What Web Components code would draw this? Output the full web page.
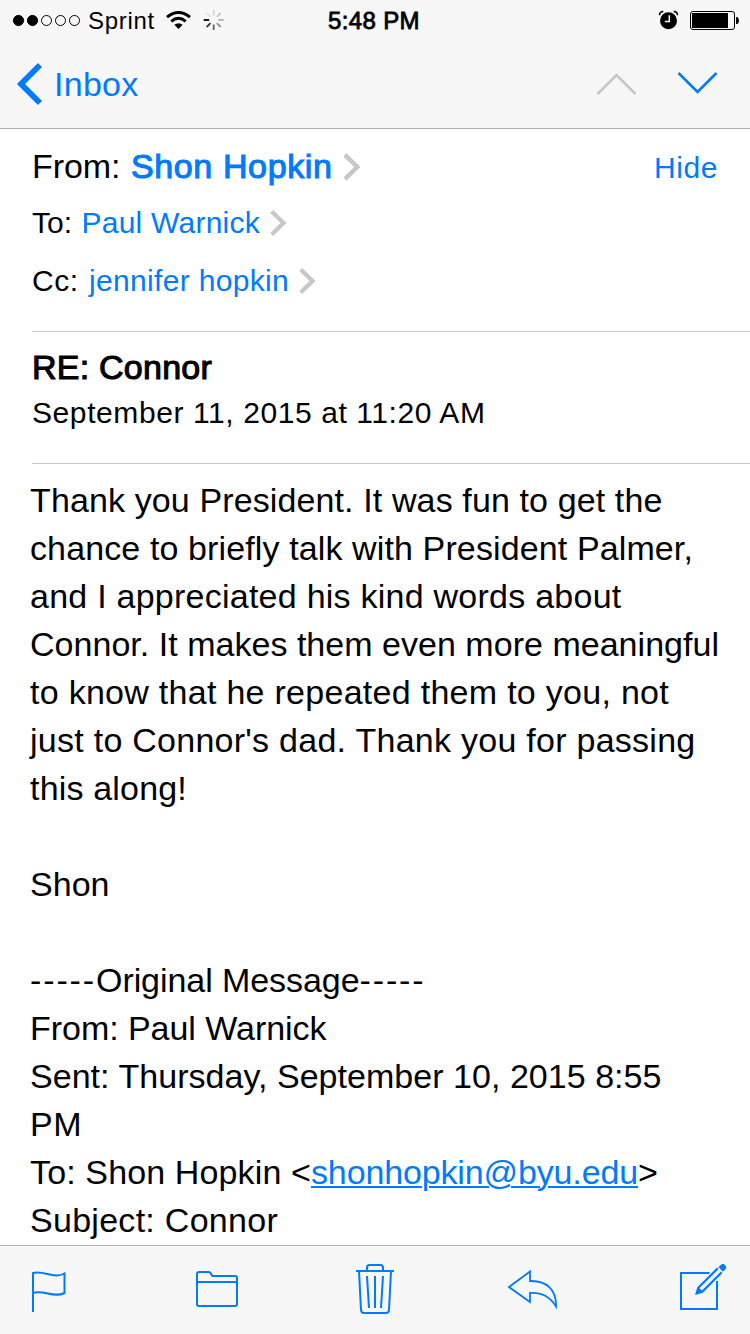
<!DOCTYPE html>
<html lang="en">
<head>
<meta charset="utf-8">
<title>Inbox</title>
<style>
html,body{margin:0;padding:0;background:#fff}
body{width:750px;height:1334px;overflow:hidden;color:#000;font-family:"Liberation Sans",Arial,Helvetica,sans-serif}
</style>
</head>
<body>
<mail-screen></mail-screen>
<script>
// A single line of text tracked to a given advance width.
class TextRun extends HTMLElement {
  constructor() {
    super();
    this.attachShadow({ mode: 'open' }).innerHTML =
      '<style>:host{display:inline-block;white-space:nowrap;flex:none}span{display:inline-block;white-space:pre}</style><span><slot></slot></span>';
  }
  connectedCallback() {
    const w = parseFloat(this.getAttribute('w'));
    if (!w) return;
    const span = this.shadowRoot.querySelector('span');
    const natural = span.getBoundingClientRect().width;
    const n = this.textContent.length;
    span.style.letterSpacing = ((w - natural) / n).toFixed(4) + 'px';
    this.style.width = w + 'px';
  }
}

class StatusBar extends HTMLElement {
  constructor() {
    super();
    this.attachShadow({ mode: 'open' }).innerHTML = `
      <style>
        :host{display:grid;grid-template-columns:328px 1fr auto;height:40px;font-size:24px;line-height:28px}
        div{display:flex;align-items:flex-start}
        svg{display:block;flex:none}
        text-run{margin-top:7px}
        .l{padding-left:12px}
        .time{-webkit-text-stroke:.8px #000}
        .r{padding-right:10px}
      </style>
      <div class="l">
        <svg width="70" height="40" viewBox="12 0 70 40"><g stroke="#000" stroke-width="1"><circle cx="18.5" cy="20.5" r="5.1"/><circle cx="32.5" cy="20.5" r="5.1"/><g fill="none"><circle cx="46.5" cy="20.5" r="5"/><circle cx="60.5" cy="20.5" r="5"/><circle cx="74.5" cy="20.5" r="5"/></g></g></svg>
        <text-run w="67" style="margin-left:6px">Sprint</text-run>
        <svg width="72" height="40" viewBox="155 0 72 40">
          <g fill="none" stroke="#000" stroke-width="3"><path d="M167 17.2Q178.500 7.800 190 17.200"/><path d="M171.300 21.300Q178.500 15.300 185.700 21.300"/></g>
          <path d="M174.300 24.800Q178.500 21.600 182.700 24.800L178.500 29Z"/>
          <g stroke-width="1.800" stroke-linecap="butt" transform="translate(213.700 20)">
            <path d="M0-4.500V-10" stroke="#d4d4d4"/><path d="M3.200-3.200L7-7" stroke="#c5c5c5"/><path d="M4.500 0H10" stroke="#b0b0b0"/><path d="M3.200 3.200L7 7" stroke="#929292"/><path d="M0 4.500V10" stroke="#606060"/><path d="M-3.200 3.200L-7 7" stroke="#333"/><path d="M-4.500 0H-10" stroke="#000"/><path d="M-3.200-3.200L-7-7" stroke="#e4e4e4"/>
          </g>
        </svg>
      </div>
      <div class="time"><text-run w="92">5:48 PM</text-run></div>
      <div class="r">
        <svg width="82" height="40" viewBox="658 0 82 40">
          <circle cx="668.500" cy="20.700" r="8.500"/>
          <path d="M659.500 15.200Q659.500 11.800 663.300 11.600M677.500 15.200Q677.500 11.800 673.700 11.600" fill="none" stroke="#000" stroke-width="1.500"/>
          <path d="M669.300 15.200V21.400H664.800" fill="none" stroke="#f7f7f7" stroke-width="1.500"/>
          <rect x="690.500" y="11.500" width="44" height="18" rx="2.500" fill="none" stroke="#000"/>
          <rect x="692" y="13" width="36" height="15" rx=".6"/>
          <path d="M736 17h1.200q1.800 1 1.800 3.500t-1.800 3.500H736z"/>
        </svg>
      </div>`;
  }
}

class NavBar extends HTMLElement {
  constructor() {
    super();
    this.attachShadow({ mode: 'open' }).innerHTML = `
      <style>
        :host{display:flex;align-items:flex-start;height:88px;font-size:34px;line-height:40px;color:#007aff}
        svg{display:block;flex:none}
        text-run{margin:24px auto 0 9px}
      </style>
      <svg width="45" height="88" viewBox="0 40 45 88"><path d="M40 65L21 84L40 103" fill="none" stroke="#007aff" stroke-width="5.700"/></svg>
      <text-run w="84.500">Inbox</text-run>
      <svg width="160" height="88" viewBox="590 40 160 88"><g fill="none" stroke-width="2.600"><path d="M597.500 94L616.500 75L635.500 94" stroke="#c7c7c7"/><path d="M678.500 73L697.500 92L716.500 73" stroke="#007aff"/></g></svg>`;
  }
}

class AddressRow extends HTMLElement {
  constructor() {
    super();
    this.attachShadow({ mode: 'open' }).innerHTML = `
      <style>
        :host{display:flex;height:40px;line-height:40px;font-size:30px}
        :host([lead]){font-size:34px}
        ::slotted([slot=name]){color:#007aff}
        :host([lead]) ::slotted([slot=name]){-webkit-text-stroke:1.100px #007aff}
        ::slotted([slot=action]){color:#007aff;font-size:30px;margin-left:auto}
        svg{display:block;flex:none;width:17px;height:26px;margin:7px 0 0 10px}
        :host([lead]) svg{width:18px;height:28px;margin-top:6.500px}
      </style>
      <slot></slot><slot name="name"></slot>
      <svg viewBox="0 0 17 26"><path d="M1.800 1.600L13.500 13L1.800 24.400" fill="none" stroke="#c7c7c7" stroke-width="4.200"/></svg>
      <slot name="action"></slot>`;
  }
}

class MessageHeader extends HTMLElement {
  constructor() {
    super();
    this.attachShadow({ mode: 'open' }).innerHTML = `
      <style>
        :host{display:block;padding-left:32px}
        section{border-bottom:1px solid #c8c7cc;display:flex;flex-direction:column}
        .to{height:185px;padding-top:17px}
        address-row+address-row{margin-top:17px}
        address-row:last-child{margin-top:18px}
        .subj{padding-top:15px;height:116px;line-height:40px;font-size:30px}
        .title{height:40px;font-size:34px;-webkit-text-stroke:1.100px #000}
        .date{height:40px;margin-top:6px}
      </style>
      <section class="to">
        <address-row lead><text-run w="88.500" style="margin-right:10.500px">From:</text-run><text-run slot="name" w="201.500">Shon Hopkin</text-run><text-run slot="action" w="64" style="margin-right:32px;padding-top:2px;line-height:40px">Hide</text-run></address-row>
        <address-row><text-run w="40" style="margin-right:9.500px">To:</text-run><text-run slot="name" w="178.500">Paul Warnick</text-run></address-row>
        <address-row><text-run w="46.500" style="margin-right:10.500px">Cc:</text-run><text-run slot="name" w="200">jennifer hopkin</text-run></address-row>
      </section>
      <section class="subj">
        <div class="title"><text-run w="180">RE: Connor</text-run></div>
        <div class="date"><text-run w="453.500">September 11, 2015 at 11:20 AM</text-run></div>
      </section>`;
  }
}

class MessageBody extends HTMLElement {
  constructor() {
    super();
    this.attachShadow({ mode: 'open' }).innerHTML = `
      <style>
        :host{display:block;padding:12px 0 0 30px;font-size:34px;line-height:48px}
        p{margin:0;height:48px;display:flex}
        a{color:#007aff}
      </style>
      <p><text-run w="632.500">Thank you President. It was fun to get the</text-run></p>
      <p><text-run w="663">chance to briefly talk with President Palmer,</text-run></p>
      <p><text-run w="591.500">and I appreciated his kind words about</text-run></p>
      <p><text-run w="689">Connor. It makes them even more meaningful</text-run></p>
      <p><text-run w="639">to know that he repeated them to you, not</text-run></p>
      <p><text-run w="665.500">just to Connor's dad. Thank you for passing</text-run></p>
      <p><text-run w="157">this along!</text-run></p>
      <p></p>
      <p><text-run w="79.500">Shon</text-run></p>
      <p></p>
      <p><text-run w="66">-----</text-run><text-run w="263.500">Original Message</text-run><text-run w="66">-----</text-run></p>
      <p><text-run w="296.500">From: Paul Warnick</text-run></p>
      <p><text-run w="631.500">Sent: Thursday, September 10, 2015 8:55</text-run></p>
      <p><text-run w="52">PM</text-run></p>
      <p><text-run w="281">To: Shon Hopkin &lt;</text-run><a><text-run w="327">shonhopkin@byu.edu</text-run></a><text-run w="21">&gt;</text-run></p>
      <p><text-run w="248">Subject: Connor</text-run></p>`;
    // Decorations do not cross into inline-block boxes, so the link's run carries its own.
    const link = this.shadowRoot.querySelector('a text-run');
    link.shadowRoot.querySelector('span').style.cssText += 'text-decoration:underline;text-decoration-thickness:2px;text-underline-offset:2px;';
  }
}

class ToolBar extends HTMLElement {
  constructor() {
    super();
    this.attachShadow({ mode: 'open' }).innerHTML = `
      <style>
        :host{display:flex;box-sizing:border-box;height:89px;border-top:1px solid #b2b2b2;background:#f7f7f7;padding-left:30px}
        svg{display:block;flex:none;height:88px;fill:none;stroke:#007aff;stroke-width:2}
      </style>
      <svg width="38" viewBox="30 1246 38 88"><path d="M33 1312V1273C44 1270 54 1279.500 64.500 1273.500V1293C54 1298.500 44 1289.500 33 1293"/></svg>
      <svg width="46" viewBox="194 1246 46 88" style="margin-left:126px"><path d="M199 1272H208.500Q210 1272 210.700 1273.200L212.300 1276H235Q237 1276 237 1278V1304Q237 1306 235 1306H199Q197 1306 197 1304V1274Q197 1272 199 1272ZM197 1284Q197 1282 199 1282H235Q237 1282 237 1284"/></svg>
      <svg width="42" viewBox="354 1246 42 88" style="margin-left:114px"><path d="M356 1271H394M367 1271V1267.500Q367 1265 369.500 1265H380.500Q383 1265 383 1267.500V1271M359 1271L361 1310Q361.200 1313 364 1313H386Q388.800 1313 389 1310L391 1271M367 1276L369 1308M375 1276V1308M383 1276L381 1308"/></svg>
      <svg width="53" viewBox="506 1246 53 88" style="margin-left:110px"><path d="M509 1287L530 1271.500V1281C547 1280.500 556.500 1290 556 1306.500C550 1297 543 1292.500 530 1293V1302Z" stroke-width="1.800"/></svg>
      <svg width="52" viewBox="678 1246 52 88" style="margin-left:119px"><path d="M709.500 1273H681V1309H717V1281"/><path d="M717.800 1268.300L698.300 1287.800L696.700 1293.300L702.200 1291.700L721.700 1272.200" stroke-width="2.200"/><path d="M698.300 1287.500L702.500 1291.700L696 1294Z" fill="#007aff" stroke-width=".8"/><path d="M719 1267.200L721.200 1265Q723 1263.500 724.800 1265.300Q726.700 1267.100 725.200 1268.900L723 1271.200Z" fill="#007aff" stroke-width="1"/></svg>`;
  }
}

class MailScreen extends HTMLElement {
  constructor() {
    super();
    this.attachShadow({ mode: 'open' }).innerHTML = `
      <style>
        :host{display:grid;grid-template-rows:129px 1fr 89px;width:750px;height:1334px;overflow:hidden}
        header{box-sizing:border-box;background:#f7f7f7;border-bottom:1px solid #b2b2b2}
        main{min-height:0;overflow:hidden}
      </style>
      <header><status-bar></status-bar><nav-bar></nav-bar></header>
      <main><message-header></message-header><message-body></message-body></main>
      <tool-bar></tool-bar>`;
  }
}

customElements.define('text-run', TextRun);
customElements.define('status-bar', StatusBar);
customElements.define('nav-bar', NavBar);
customElements.define('address-row', AddressRow);
customElements.define('message-header', MessageHeader);
customElements.define('message-body', MessageBody);
customElements.define('tool-bar', ToolBar);
customElements.define('mail-screen', MailScreen);
</script>
</body>
</html>
